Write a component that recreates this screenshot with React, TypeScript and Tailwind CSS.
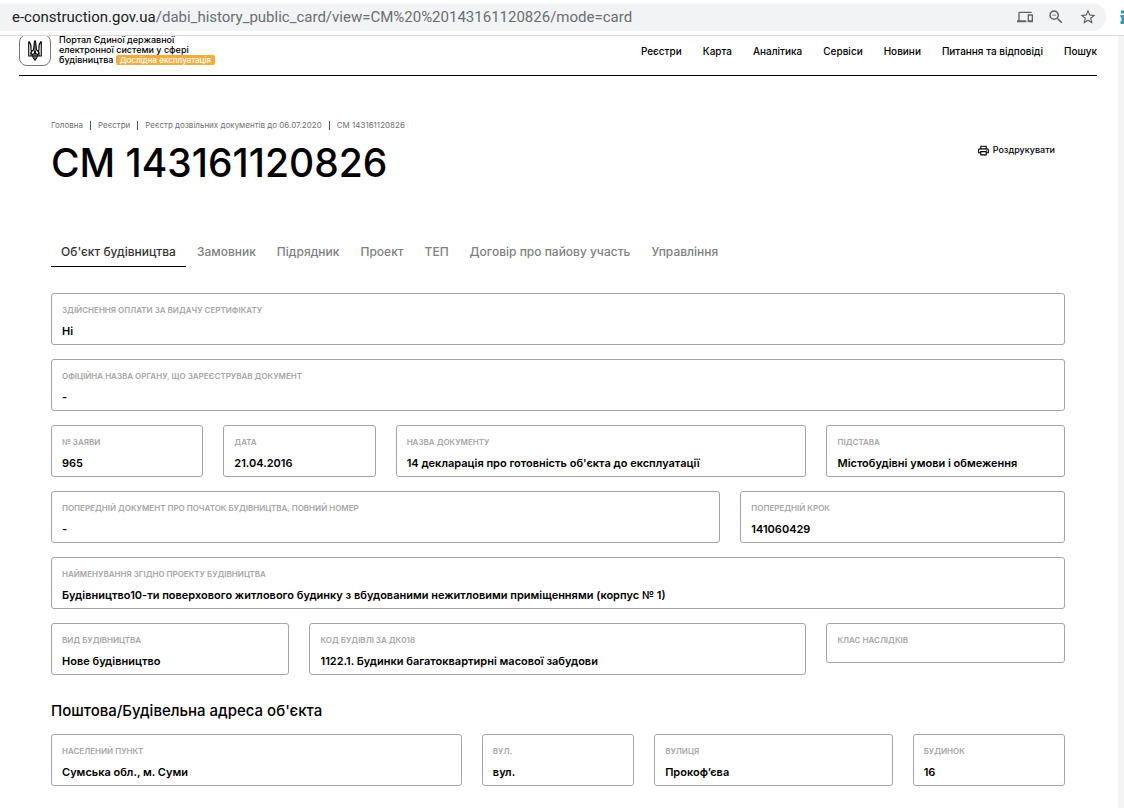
import React from "react";
import { MdDevices, MdZoomOut, MdStarBorder, MdOutlinePrint } from "react-icons/md";

type FieldProps = { label: string; value?: string; span: string };

const NAV = ["Реєстри", "Карта", "Аналітика", "Сервіси", "Новини", "Питання та відповіді", "Пошук"];

const CRUMBS = ["Головна", "Реєстри", "Реєстр дозвільних документів до 06.07.2020", "СМ 143161120826"];

const TABS = ["Об'єкт будівництва", "Замовник", "Підрядник", "Проект", "ТЕП", "Договір про пайову участь", "Управління"];

const OBJECT_FIELDS: FieldProps[] = [
  { label: "Здійснення оплати за видачу сертифікату", value: "Ні", span: "col-span-12" },
  { label: "Офіційна назва органу, що зареєстрував документ", value: "-", span: "col-span-12" },
  { label: "№ заяви", value: "965", span: "col-span-2" },
  { label: "Дата", value: "21.04.2016", span: "col-span-2" },
  { label: "Назва документу", value: "14 декларація про готовність об'єкта до експлуатації", span: "col-span-5" },
  { label: "Підстава", value: "Містобудівні умови і обмеження", span: "col-span-3" },
  { label: "Попередній документ про початок будівництва, повний номер", value: "-", span: "col-span-8" },
  { label: "Попередній крок", value: "141060429", span: "col-span-4" },
  {
    label: "Найменування згідно проекту будівництва",
    value: "Будівництво10-ти поверхового житлового будинку з вбудованими нежитловими приміщеннями (корпус № 1)",
    span: "col-span-12",
  },
  { label: "Вид будівництва", value: "Нове будівництво", span: "col-span-3" },
  { label: "Код будівлі за ДК018", value: "1122.1. Будинки багатоквартирні масової забудови", span: "col-span-6" },
  { label: "Клас наслідків", span: "col-span-3" },
];

const ADDRESS_FIELDS: FieldProps[] = [
  { label: "Населений пункт", value: "Сумська обл., м. Суми", span: "col-span-5" },
  { label: "Вул.", value: "вул.", span: "col-span-2" },
  { label: "Вулиця", value: "Прокоф’єва", span: "col-span-3" },
  { label: "Будинок", value: "16", span: "col-span-2" },
];

function Trident() {
  return (
    <svg viewBox="0 0 28 42" className="h-[21px] w-[14px]" fill="none" stroke="#000" strokeWidth="2.2" aria-hidden="true">
      <path d="M1.5 3V32H9.5C10 36 12 37.5 14 40.5C16 37.5 18 36 18.5 32H26.5V3" />
      <path d="M1.5 3C5.500 7 6.500 12 6 17C5.700 20 5.500 21 7.500 22.500" />
      <path d="M26.500 3C22.500 7 21.500 12 22 17C22.300 20 22.500 21 20.500 22.500" />
      <path d="M14 1.500C11 5 12.500 13 11 19C10.300 22 6 22 6 25.500C6 28 8 28.500 9.500 28.500C12.500 28.500 14 26 14 22" />
      <path d="M14 1.500C17 5 15.500 13 17 19C17.700 22 22 22 22 25.500C22 28 20 28.500 18.500 28.500C15.500 28.500 14 26 14 22" />
      <path d="M6 25V32M22 25V32M14 1V40M9.500 28.500V32H18.500V28.500" />
    </svg>
  );
}

function BrowserBar() {
  return (
    <div className="flex h-9 items-center border-b border-[#d8d8da] bg-white pb-1 pt-[3px]">
      <div className="flex h-7 min-w-0 flex-1 items-center rounded-r-full bg-[#f1f3f4] pl-3 pr-[9px]">
        <p className="min-w-0 flex-1 truncate font-[Roboto,sans-serif] text-[15px] leading-5 text-[#6b6e72]">
          <span className="text-[#202124]">e-construction.gov.ua</span>
          /dabi_history_public_card/view=CM%20%20143161120826/mode=card
        </p>
        <div className="flex items-center gap-[14px] text-[#5f6368]">
          <button type="button" aria-label="Devices">
            <MdDevices size={16} />
          </button>
          <button type="button" aria-label="Zoom">
            <MdZoomOut size={18} />
          </button>
          <button type="button" aria-label="Bookmark">
            <MdStarBorder size={18} />
          </button>
        </div>
      </div>
      <svg viewBox="0 0 4 14" className="ml-[14px] h-[14px] w-1" aria-hidden="true">
        <path d="M1 0.500H4V3.500H1ZM0.500 5H4V14H0.500V11H1.500V7.500H0.500Z" fill="#2a9db5" />
      </svg>
    </div>
  );
}

function SiteHeader() {
  return (
    <header className="ml-[19px] mr-[21px] flex h-10 items-start justify-between border-b border-black">
      <a href="#home" className="flex items-start gap-2">
        <span className="flex h-[30px] items-end overflow-hidden">
          <span className="flex size-8 shrink-0 items-center justify-center rounded-lg border border-[#777]">
            <Trident />
          </span>
        </span>
        <span className="-mt-px block text-[9px] font-medium leading-[10px] text-black">
          Портал Єдиної державної
          <br />
          електронної системи у сфері
          <br />
          будівництва{" "}
          <span className="inline-block rounded-[2px] bg-[#f0ad3c] px-1 text-[8px] text-white">Дослідна експлуатація</span>
        </span>
      </a>
      <nav className="flex gap-[21px] pt-2">
        {NAV.map((item) => (
          <a key={item} href="#nav" className="text-[10px] font-medium leading-[14px] text-black">
            {item}
          </a>
        ))}
      </nav>
    </header>
  );
}

function Field({ label, value, span }: FieldProps) {
  return (
    <div className={`${span} self-start rounded-[3px] border border-[#a5a5a5] px-[10px] pb-[6px] pt-[10px]`}>
      <dt className="text-[8px] font-semibold uppercase leading-3 text-[#a6a6a6]">{label}</dt>
      {value ? (
        <dd className="pt-2 text-[11px] font-semibold leading-[14px] text-black">{value}</dd>
      ) : (
        <dd className="h-[10px]" />
      )}
    </div>
  );
}

function FieldGrid({ fields }: { fields: FieldProps[] }) {
  return (
    <dl className="grid grid-cols-12 gap-x-5 gap-y-[14px]">
      {fields.map((f) => (
        <Field key={f.label} {...f} />
      ))}
    </dl>
  );
}

export default function App() {
  return (
    <div className="flex min-h-screen flex-col bg-white font-[Inter,'Liberation_Sans',sans-serif]">
      <BrowserBar />
      <div className="flex-1 border-r-[6px] border-[#f4f4f4]">
        <SiteHeader />
        <main className="ml-[51px] mr-[53px] pb-[19px] pt-[43px]">
          <ol className="flex text-[8px] leading-3 text-[#707070]">
            {CRUMBS.map((c, i) => (
              <li key={c} className="flex items-center">
                {i > 0 && <span className="mx-[7px] h-[9px] w-px bg-[#555]" />}
                <a href="#crumb">{c}</a>
              </li>
            ))}
          </ol>
          <div className="flex items-start justify-between pt-[7px]">
            <h1 className="text-[39px] font-medium leading-[50px] text-black">СМ 143161120826</h1>
            <button type="button" className="mr-[10px] mt-[5px] flex items-center gap-[3px] text-[9px] font-medium leading-[14px] text-black">
              <MdOutlinePrint size={13} />
              Роздрукувати
            </button>
          </div>
          <div role="tablist" className="flex gap-px pt-14">
            {TABS.map((t, i) => (
              <button
                key={t}
                type="button"
                role="tab"
                aria-selected={i === 0}
                className={
                  i === 0
                    ? "border-b border-black px-[10px] pb-[6px] text-[12px] font-medium leading-4 text-[#333]"
                    : "border-b border-transparent px-[10px] pb-[6px] text-[12px] font-medium leading-4 text-[#808080]"
                }
              >
                {t}
              </button>
            ))}
          </div>
          <section className="pt-[26px]">
            <FieldGrid fields={OBJECT_FIELDS} />
          </section>
          <section className="pt-[26px]">
            <h2 className="pb-[13px] text-[15px] font-medium leading-5 text-black">Поштова/Будівельна адреса об'єкта</h2>
            <FieldGrid fields={ADDRESS_FIELDS} />
          </section>
        </main>
      </div>
    </div>
  );
}
